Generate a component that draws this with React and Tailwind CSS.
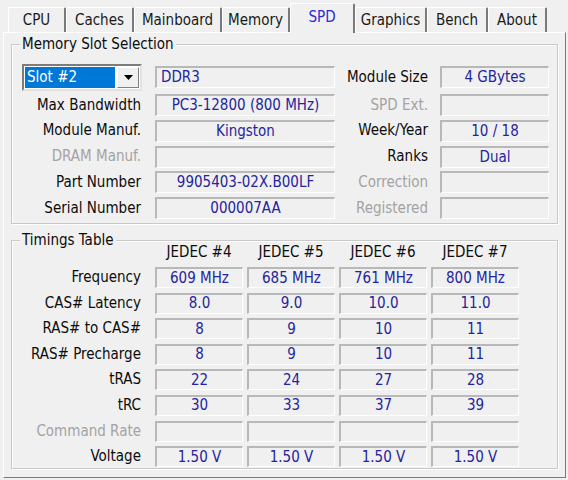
import React from 'react';

const join = (...c) => c.filter(Boolean).join(' ');

const TABS = [
    { label: 'CPU', w: 'w-[58px]' },
    { label: 'Caches', w: 'w-[68px]' },
    { label: 'Mainboard', w: 'w-[88px]' },
    { label: 'Memory', w: 'w-[68px]' },
    { label: 'SPD', w: 'w-[65px]', active: true },
    { label: 'Graphics', w: 'w-[72px]' },
    { label: 'Bench', w: 'w-[61px]' },
    { label: 'About', w: 'w-[59px]' },
];

const SLOT_ROWS = [
    { left: 'Max Bandwidth', value: 'PC3-12800 (800 MHz)', right: 'SPD Ext.', rightDim: true, rval: '' },
    { left: 'Module Manuf.', value: 'Kingston', right: 'Week/Year', rval: '10 / 18' },
    { left: 'DRAM Manuf.', leftDim: true, value: '', right: 'Ranks', rval: 'Dual' },
    { left: 'Part Number', value: '9905403-02X.B00LF', right: 'Correction', rightDim: true, rval: '' },
    { left: 'Serial Number', value: '000007AA', right: 'Registered', rightDim: true, rval: '' },
];

const TIMINGS = [
    { label: 'Frequency', vals: ['609 MHz', '685 MHz', '761 MHz', '800 MHz'] },
    { label: 'CAS# Latency', vals: ['8.0', '9.0', '10.0', '11.0'] },
    { label: 'RAS# to CAS#', vals: ['8', '9', '10', '11'] },
    { label: 'RAS# Precharge', vals: ['8', '9', '10', '11'] },
    { label: 'tRAS', vals: ['22', '24', '27', '28'] },
    { label: 'tRC', vals: ['30', '33', '37', '39'] },
    { label: 'Command Rate', dim: true, vals: ['', '', '', ''] },
    { label: 'Voltage', vals: ['1.50 V', '1.50 V', '1.50 V', '1.50 V'] },
];

function Field({ children, className, left }) {
    return (
        <div className={join(
            'flex items-center whitespace-nowrap bg-[#f0f0f0] text-[#24249c] leading-none',
            'border-t-2 border-l-2 border-r border-b border-t-[#b8b8b8] border-l-[#b8b8b8] border-r-white border-b-white',
            left ? 'justify-start pl-[4px]' : 'justify-center',
            className
        )}>
            {children}
        </div>
    );
}

function Label({ children, dim, className }) {
    return (
        <div className={join('text-right whitespace-nowrap leading-none', dim ? 'text-[#a3a3a3]' : 'text-[#0c0c0c]', className)}>
            {children}
        </div>
    );
}

function GroupBox({ title, className, children }) {
    return (
        <div className={join('relative border border-[#c9c9c9] shadow-[inset_1px_1px_0_#fff,1px_1px_0_#fff]', className)}>
            <span className="absolute left-[8px] top-[-10px] bg-[#f0f0f0] px-[2px] leading-[18px] text-[#0c0c0c]">{title}</span>
            {children}
        </div>
    );
}

function SlotCombo() {
    return (
        <div className="w-[120px] h-[27px] -my-[2px] flex bg-white p-[1px] gap-[2px] border-2 border-t-[#7c7c7c] border-l-[#7c7c7c] border-r-[#e3e3e3] border-b-[#e3e3e3]">
            <div className="flex-1 bg-[#0078d7] text-white flex items-center pl-[2px] leading-none">Slot #2</div>
            <div className="w-[22px] flex items-center justify-center bg-[#f0f0f0] border border-t-white border-l-white border-r-[#808080] border-b-[#808080]">
                <svg width="9" height="5" viewBox="0 0 9 5"><polygon points="0,0 9,0 4.5,5" fill="#000" /></svg>
            </div>
        </div>
    );
}

export default function App() {
    return (
        <div className="w-[568px] h-[480px] overflow-hidden bg-[#f0f0f0] text-[15px] font-['DejaVu_Sans_Condensed','DejaVu_Sans',sans-serif] select-none">
            {/* tab strip */}
            <div className="h-[32px] flex items-end pl-[8px]">
                {TABS.map(t => (
                    <div
                        key={t.label}
                        className={join(
                            'flex items-center justify-center border-t border-l border-r-2 border-t-white border-l-white border-r-[#7a7a7a] rounded-t-[2px] leading-none',
                            t.w,
                            t.active
                                ? 'h-[30px] -mb-[1px] relative z-10 bg-[#f0f0f0] text-[#2929d6] pb-[2px]'
                                : 'h-[25px] bg-[#f0f0f0] text-[#1a1a1a]'
                        )}
                    >
                        {t.label}
                    </div>
                ))}
            </div>

            {/* tab page */}
            <div className="ml-[3px] mr-[2px] h-[446px] border border-t-white border-l-white border-r-[#7a7a7a] border-b-[#7a7a7a] pl-[7px] pr-[7px] pt-[11px]">
                <GroupBox title="Memory Slot Selection" className="h-[180px] pl-[10px] pr-[5px] pt-[21px]">
                    <div className="flex items-center h-[22px]">
                        <SlotCombo />
                        <Field left className="ml-[13px] w-[180px] h-[22px]">DDR3</Field>
                        <Label className="w-[93px]">Module Size</Label>
                        <Field className="ml-[12px] w-[109px] h-[22px]">4 GBytes</Field>
                    </div>
                    <div className="mt-[6px] flex flex-col gap-[3.75px]">
                        {SLOT_ROWS.map(r => (
                            <div key={r.left} className="flex items-center h-[22px]">
                                <Label dim={r.leftDim} className="w-[120px] pr-[1px]">{r.left}</Label>
                                <Field className="ml-[13px] w-[180px] h-[22px]">{r.value}</Field>
                                <Label dim={r.rightDim} className="w-[93px]">{r.right}</Label>
                                <Field className="ml-[12px] w-[109px] h-[22px]">{r.rval}</Field>
                            </div>
                        ))}
                    </div>
                </GroupBox>

                <GroupBox title="Timings Table" className="mt-[16px] h-[229px] pl-[10px]">
                    <div className="flex h-[20px] mt-[1px] items-center">
                        <div className="w-[120px]" />
                        <div className="ml-[13px] flex gap-[4px]">
                            {['JEDEC #4', 'JEDEC #5', 'JEDEC #6', 'JEDEC #7'].map(h => (
                                <div key={h} className="w-[88px] text-center text-[#0c0c0c] leading-none">{h}</div>
                            ))}
                        </div>
                    </div>
                    <div className="mt-[5px] flex flex-col gap-[4.6px]">
                        {TIMINGS.map(r => (
                            <div key={r.label} className="flex items-center h-[21px]">
                                <Label dim={r.dim} className="w-[120px] pr-[1px]">{r.label}</Label>
                                <div className="ml-[13px] flex gap-[4px]">
                                    {r.vals.map((v, i) => (
                                        <Field key={i} className="w-[88px] h-[21px]">{v}</Field>
                                    ))}
                                </div>
                            </div>
                        ))}
                    </div>
                </GroupBox>
            </div>
        </div>
    );
}
